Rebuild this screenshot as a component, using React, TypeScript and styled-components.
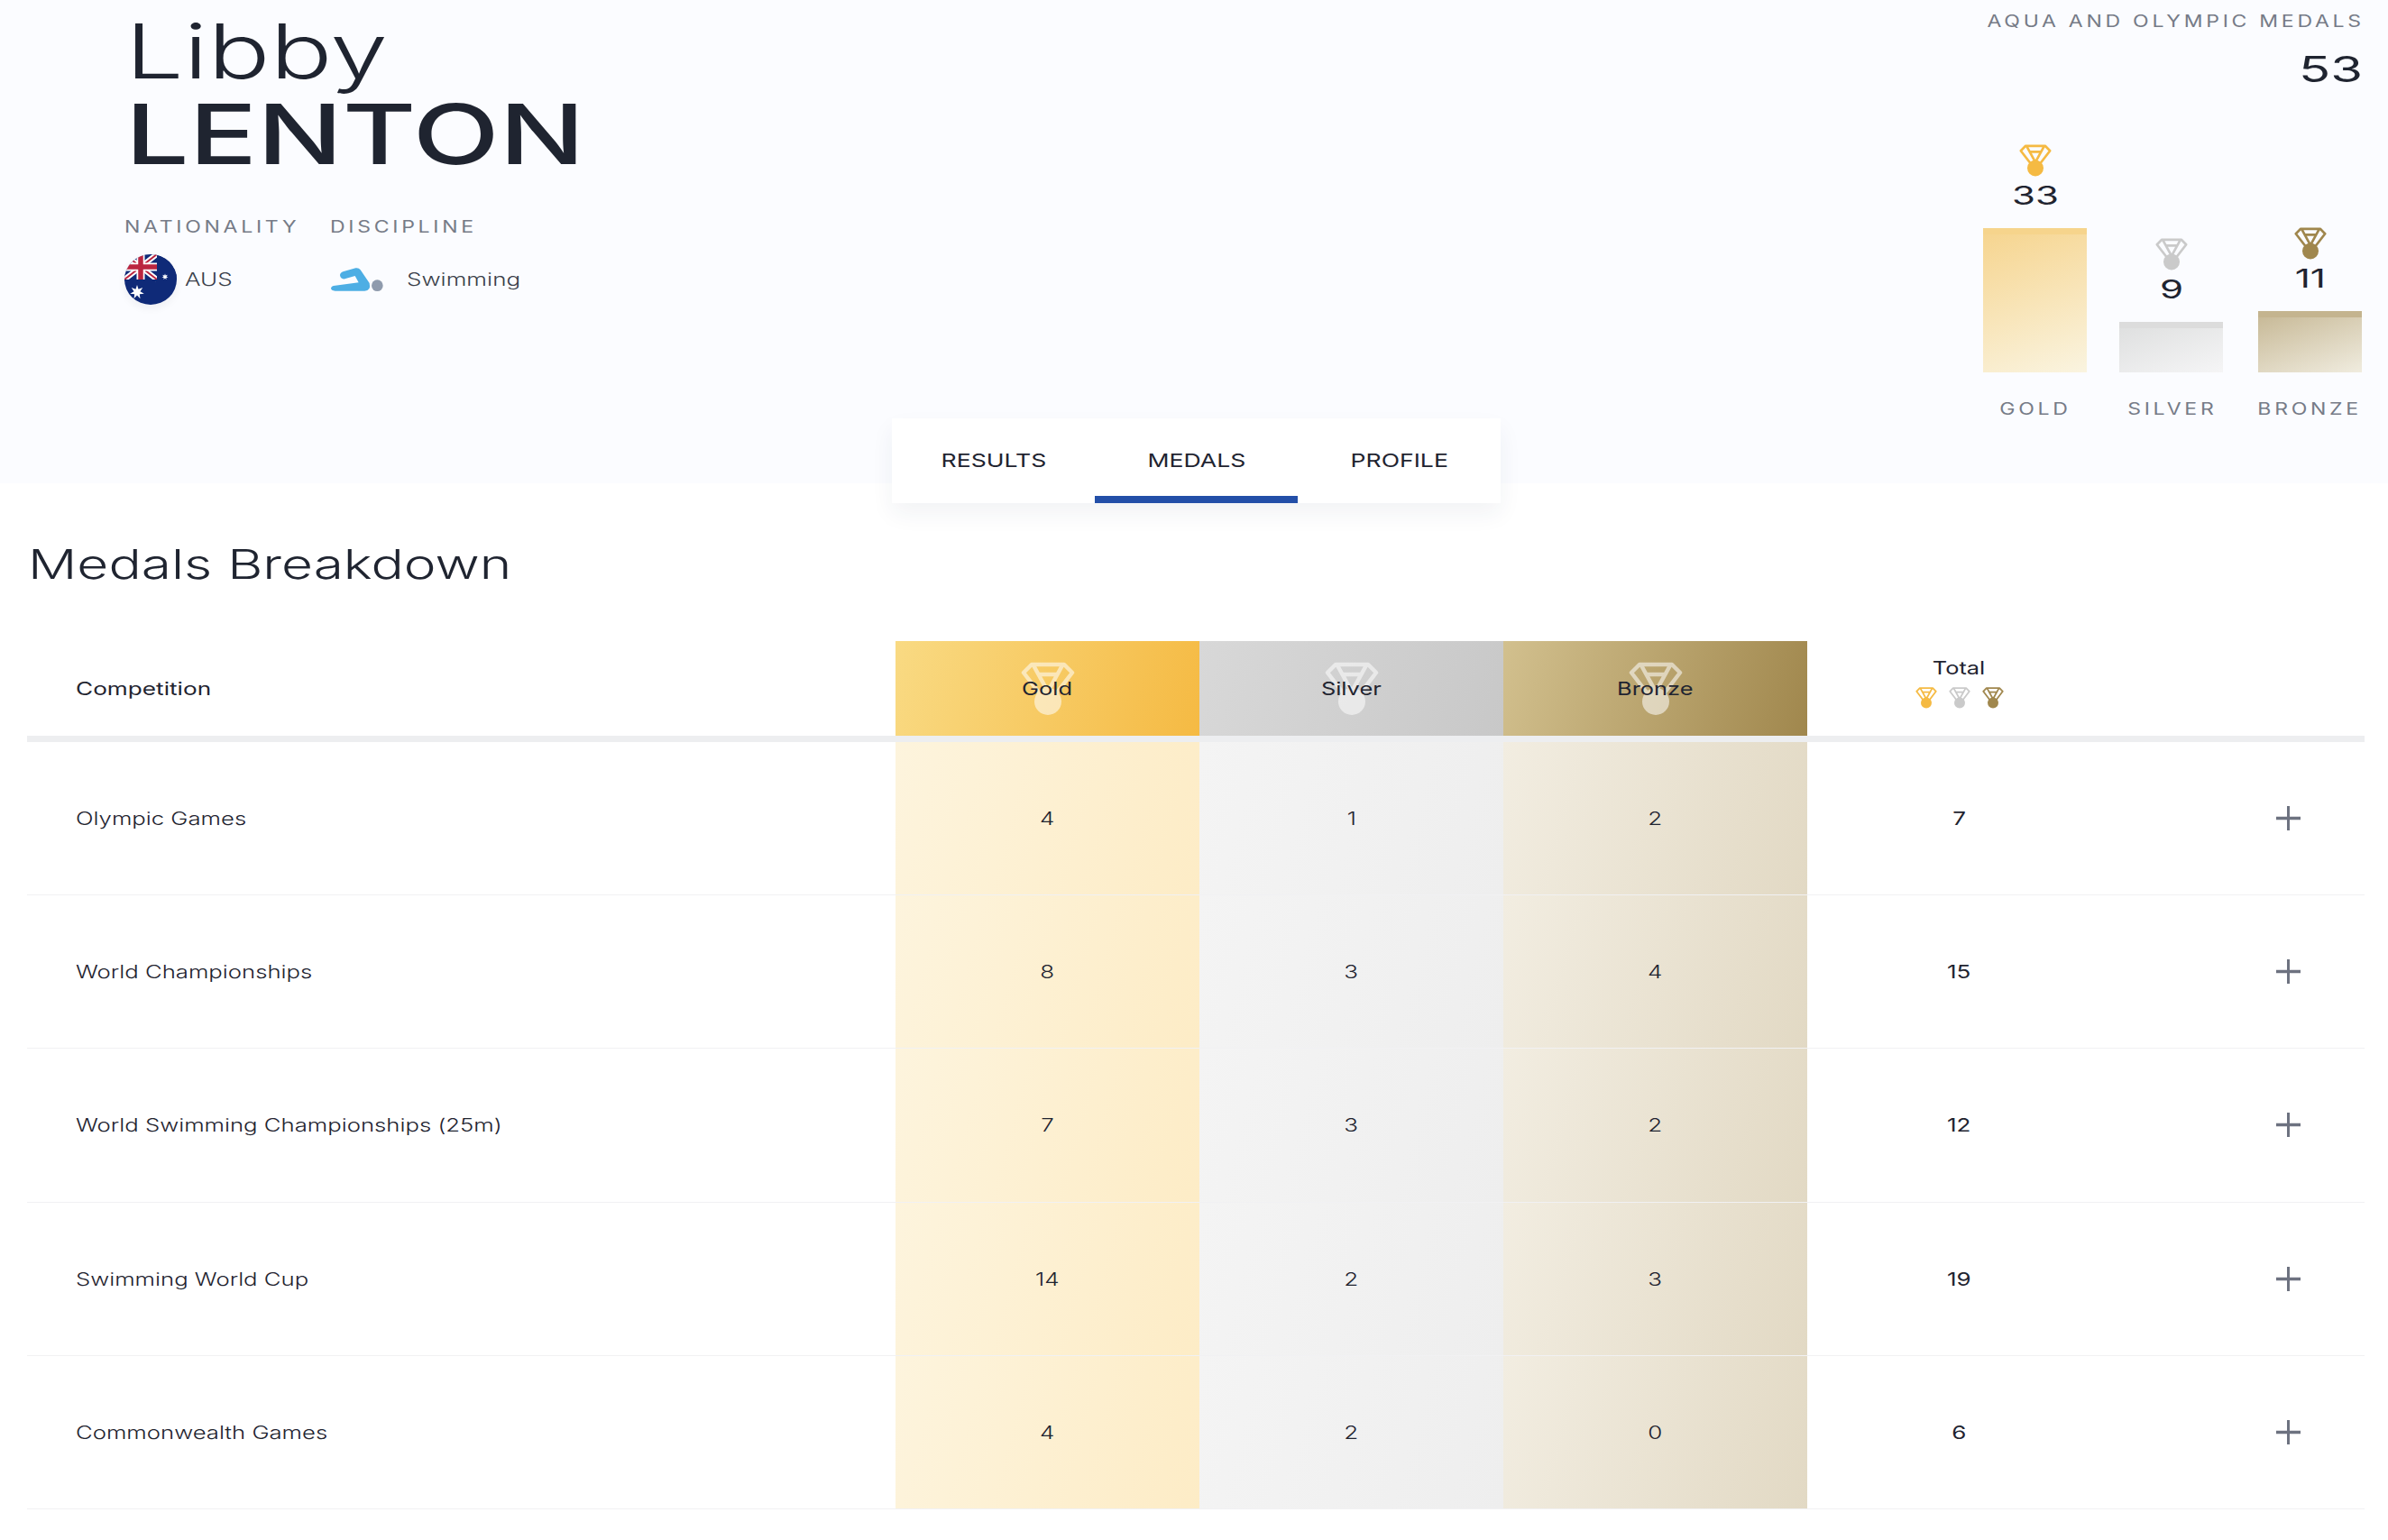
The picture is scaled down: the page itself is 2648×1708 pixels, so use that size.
import React from "react";
import styled, { createGlobalStyle, css } from "styled-components";

const INK = "#1f2430";
const GREY = "#767b87";

const GlobalStyle = createGlobalStyle`
  html, body {
    margin: 0;
    padding: 0;
    background: #fff;
    font-family: "Inter", "Liberation Sans", sans-serif;
    color: ${INK};
  }
`;

// the reference font is an extended grotesque, none is installed, so stretch Inter
const wide = (origin: string, sx = 1.3) => css`
  display: inline-block;
  white-space: nowrap;
  transform: scaleX(${sx});
  transform-origin: ${origin};
`;

const Page = styled.div`
  width: 2648px;
  height: 1708px;
  overflow: hidden;
`;

const Hero = styled.header`
  height: 536px;
  box-sizing: border-box;
  background: #fbfcff;
  display: flex;
  justify-content: space-between;
  padding: 12px 29px 0 138px;
`;

const Athlete = styled.div`
  display: flex;
  flex-direction: column;
`;

const FirstName = styled.span`
  ${wide("left", 1.365)}
  margin-left: 1px;
  font-size: 84px;
  line-height: 90px;
  font-weight: 300;
`;

const LastName = styled.span`
  ${wide("left", 1.36)}
  margin-left: 1px;
  font-size: 92px;
  line-height: 94px;
  font-weight: 450;
`;

const MetaRow = styled.div`
  display: flex;
  margin-top: 46px;
`;

const MetaBlock = styled.div<{ $width: number }>`
  width: ${(p) => p.$width}px;
  display: flex;
  flex-direction: column;
  gap: 20px;
`;

const Eyebrow = styled.span<{ $origin?: string }>`
  ${(p) => wide(p.$origin || "left", 1.28)}
  font-size: 18px;
  line-height: 20px;
  letter-spacing: 2.9px;
  color: ${GREY};
`;

const MetaValue = styled.div<{ $gap: number }>`
  display: flex;
  align-items: center;
  gap: ${(p) => p.$gap}px;
  height: 56px;
`;

const MetaText = styled.span`
  ${wide("left")}
  font-size: 20px;
  font-weight: 300;
  color: #3a3f4a;
`;

const FlagDisc = styled.svg`
  width: 58px;
  height: 56px;
  border-radius: 50%;
  box-shadow: 0 4px 10px rgba(31, 36, 48, 0.06);
`;

const Summary = styled.section`
  display: flex;
  flex-direction: column;
  align-items: flex-end;
`;

const TotalLabel = styled(Eyebrow)`
  line-height: 24px;
  margin-right: -3px;
`;

const TotalValue = styled.span`
  ${wide("right", 1.45)}
  margin: 17px -1px 0 0;
  font-size: 40px;
  line-height: 48px;
`;

const Chart = styled.div`
  display: grid;
  grid-template-columns: repeat(3, 115px);
  column-gap: 37.5px;
  align-items: end;
  height: 312px;
`;

const ChartColumn = styled.div`
  display: flex;
  flex-direction: column;
  align-items: center;

  &:nth-child(2) {
    margin: 0 1.5px 0 -1.5px;
  }
`;

const ChartCount = styled.span`
  ${wide("center", 1.45)}
  margin: 6px 0 21px;
  font-size: 29px;
  line-height: 30px;
`;

const barFills = {
  gold: ["#f6d48c", "#f6d590", "#faf4e0"],
  silver: ["#dcdcdc", "#dfe0e0", "#f5f5f6"],
  bronze: ["#c4b48f", "#c8ba98", "#f0ecdf"],
};

type Metal = keyof typeof barFills;

const Bar = styled.div<{ $metal: Metal; $height: number }>`
  width: 100%;
  height: ${(p) => p.$height}px;
  background: linear-gradient(160deg, ${(p) => barFills[p.$metal][1]}, ${(p) => barFills[p.$metal][2]});
  border-top: 7px solid ${(p) => barFills[p.$metal][0]};
  box-sizing: border-box;
`;

const ChartLabels = styled.div`
  display: grid;
  grid-template-columns: repeat(3, 115px);
  column-gap: 37.5px;
  margin-top: 31px;
  justify-items: center;
`;

const ChartLabel = styled(Eyebrow)``;

const Tabs = styled.nav`
  position: relative;
  width: 675px;
  height: 94px;
  margin: -72px 0 0 989px;
  display: flex;
  background: #fff;
  box-shadow: 0 12px 24px rgba(31, 45, 90, 0.06);
`;

const Tab = styled.div<{ $active?: boolean }>`
  flex: 1;
  display: flex;
  align-items: center;
  justify-content: center;
  box-shadow: ${(p) => (p.$active ? "inset 0 -8px 0 #234fa8" : "none")};
`;

const TabText = styled.span`
  ${wide("center", 1.33)}
  font-size: 20px;
  font-weight: 400;
`;

const Heading = styled.h2`
  ${wide("left", 1.342)}
  display: block;
  margin: 38px 0 55px 31px;
  font-size: 45px;
  line-height: 60px;
  font-weight: 300;
`;

const Table = styled.div`
  margin: 0 26px 0 30px;
`;

const columns = css`
  display: grid;
  grid-template-columns: 963px repeat(4, 337px) 1fr;
`;

const HeadRow = styled.div`
  ${columns}
  height: 112px;
  box-sizing: border-box;
  border-bottom: 7px solid #edeef0;
`;

const BodyRow = styled.div`
  ${columns}
  height: 170.2px;
  box-sizing: border-box;
  border-bottom: 1px solid #f1f1f3;
`;

const Cell = styled.div`
  display: flex;
  align-items: center;
  justify-content: center;
`;

const NameCell = styled(Cell)`
  justify-content: flex-start;
  padding-left: 54px;
`;

const headFills = {
  gold: "linear-gradient(105deg, #f9da83, #f5ba43)",
  silver: "linear-gradient(105deg, #d8d8d8, #c8c8c8)",
  bronze: "linear-gradient(105deg, #d2c08e, #a0874d)",
};

const bodyFills = {
  gold: "linear-gradient(105deg, #fdf4dd, #fdecc6)",
  silver: "linear-gradient(105deg, #f4f4f4, #eeeeee)",
  bronze: "linear-gradient(105deg, #f2ede1, #e2d9c4)",
};

const MetalHead = styled(Cell)<{ $metal: Metal }>`
  position: relative;
  background: ${(p) => headFills[p.$metal]};
`;

const MetalBody = styled(Cell)<{ $metal: Metal }>`
  background: ${(p) => bodyFills[p.$metal]};
`;

const Watermark = styled.span`
  position: absolute;
  left: 50%;
  top: 23px;
  width: 60px;
  height: 60px;
  margin-left: -30px;
  opacity: 0.55;
`;

const HeadText = styled.span`
  ${wide("left", 1.31)}
  font-size: 20px;
  font-weight: 400;
`;

const HeadCenter = styled.span`
  ${wide("center", 1.27)}
  position: relative;
  font-size: 20px;
  line-height: 26px;
  font-weight: 400;
`;

const TotalHead = styled(Cell)`
  flex-direction: column;
  gap: 8px;
  padding-bottom: 14px;
`;

const TinyMedals = styled.div`
  display: flex;
  gap: 13px;
`;

const RowName = styled.span`
  ${wide("left", 1.285)}
  font-size: 20px;
  font-weight: 300;
  padding-top: 1px;
`;

const Count = styled.span`
  ${wide("center", 1.3)}
  font-size: 20px;
  font-weight: 300;
  padding-top: 1px;
`;

const RowTotal = styled.span`
  ${wide("center", 1.3)}
  font-size: 20px;
  font-weight: 400;
  padding-top: 1px;
`;

const ExpandCell = styled(Cell)`
  justify-content: flex-end;
  padding-right: 71px;
`;

const medalColors = { gold: "#f5ba43", silver: "#cacaca", bronze: "#a0874d" };

const Medal = ({ color, size }: { color: string; size: number }) => (
  <svg width={size} height={size} viewBox="0 0 60 60" fill="none" style={{ display: "block" }}>
    <path
      d="M23 38 L3 12 L12 3 H48 L57 12 L37 38 M14 4 L30 33 L46 4 M19 14 H41"
      stroke={color}
      strokeWidth="4.5"
      strokeLinejoin="round"
    />
    <circle cx="30" cy="44" r="15" fill={color} />
  </svg>
);

const starPoints = (cx: number, cy: number, r: number) => {
  const pts: string[] = [];
  for (let i = 0; i < 14; i++) {
    const a = (Math.PI * i) / 7 - Math.PI / 2;
    const d = i % 2 === 0 ? r : r * 0.45;
    pts.push(`${(cx + d * Math.cos(a)).toFixed(2)},${(cy + d * Math.sin(a)).toFixed(2)}`);
  }
  return pts.join(" ");
};

const Flag = () => (
  <FlagDisc viewBox="0 0 58 56">
    <rect width="58" height="56" fill="#0f2a78" />
    <path d="M0 0 L36 28 M36 0 L0 28" stroke="#fff" strokeWidth="6" />
    <path d="M0 0 L36 28 M36 0 L0 28" stroke="#bb2540" strokeWidth="2" />
    <path d="M18 0 V28 M0 14 H36" stroke="#fff" strokeWidth="9" />
    <path d="M18 0 V28 M0 14 H36" stroke="#bb2540" strokeWidth="5.5" />
    <rect x="36" y="0" width="22" height="28" fill="#0f2a78" />
    <rect x="0" y="28" width="36" height="2" fill="#0f2a78" />
    <polygon points={starPoints(14, 42, 8)} fill="#fff" />
    <polygon points={starPoints(45, 25, 3.6)} fill="#fff" />
  </FlagDisc>
);

const SwimIcon = () => (
  <svg width="60" height="28" viewBox="45 80 180 84" fill="none" style={{ display: "block" }}>
    <path
      d="M88 96 L130 84 Q140 82 146 90 L176 134 Q182 160 160 160 L62 160 Q48 160 48 150 Q50 143 62 142 L140 132 L128 110 L94 120 Q80 122 78 108 Q78 100 88 96 Z"
      fill="#4daee4"
    />
    <circle cx="202" cy="142" r="19" fill="#8f9bad" />
  </svg>
);

const PlusIcon = () => (
  <svg width="27" height="27" viewBox="0 0 27 27" style={{ display: "block" }}>
    <path d="M13.5 0 V27" stroke="#6d7280" strokeWidth="3" />
    <path d="M0 13.5 H27" stroke="#6d7280" strokeWidth="3.5" />
  </svg>
);

const podium: { metal: Metal; label: string; count: number; height: number }[] = [
  { metal: "gold", label: "GOLD", count: 33, height: 160 },
  { metal: "silver", label: "SILVER", count: 9, height: 56 },
  { metal: "bronze", label: "BRONZE", count: 11, height: 68 },
];

const rows = [
  { name: "Olympic Games", gold: 4, silver: 1, bronze: 2, total: 7 },
  { name: "World Championships", gold: 8, silver: 3, bronze: 4, total: 15 },
  { name: "World Swimming Championships (25m)", gold: 7, silver: 3, bronze: 2, total: 12 },
  { name: "Swimming World Cup", gold: 14, silver: 2, bronze: 3, total: 19 },
  { name: "Commonwealth Games", gold: 4, silver: 2, bronze: 0, total: 6 },
];

export default function App() {
  return (
    <Page>
      <GlobalStyle />
      <Hero>
        <Athlete>
          <FirstName>Libby</FirstName>
          <LastName>LENTON</LastName>
          <MetaRow>
            <MetaBlock $width={228}>
              <Eyebrow>NATIONALITY</Eyebrow>
              <MetaValue $gap={9}>
                <Flag />
                <MetaText>AUS</MetaText>
              </MetaValue>
            </MetaBlock>
            <MetaBlock $width={240}>
              <Eyebrow>DISCIPLINE</Eyebrow>
              <MetaValue $gap={25}>
                <SwimIcon />
                <MetaText>Swimming</MetaText>
              </MetaValue>
            </MetaBlock>
          </MetaRow>
        </Athlete>
        <Summary>
          <TotalLabel $origin="right">AQUA AND OLYMPIC MEDALS</TotalLabel>
          <TotalValue>53</TotalValue>
          <Chart>
            {podium.map((p) => (
              <ChartColumn key={p.metal}>
                <Medal color={medalColors[p.metal]} size={36} />
                <ChartCount>{p.count}</ChartCount>
                <Bar $metal={p.metal} $height={p.height} />
              </ChartColumn>
            ))}
          </Chart>
          <ChartLabels>
            {podium.map((p) => (
              <ChartLabel key={p.metal} $origin="center">
                {p.label}
              </ChartLabel>
            ))}
          </ChartLabels>
        </Summary>
      </Hero>
      <Tabs>
        <Tab>
          <TabText>RESULTS</TabText>
        </Tab>
        <Tab $active>
          <TabText>MEDALS</TabText>
        </Tab>
        <Tab>
          <TabText>PROFILE</TabText>
        </Tab>
      </Tabs>
      <Heading>Medals Breakdown</Heading>
      <Table>
        <HeadRow>
          <NameCell>
            <HeadText>Competition</HeadText>
          </NameCell>
          {podium.map((p) => (
            <MetalHead key={p.metal} $metal={p.metal}>
              <Watermark>
                <Medal color="#ffffff" size={60} />
              </Watermark>
              <HeadCenter>{p.label.charAt(0) + p.label.slice(1).toLowerCase()}</HeadCenter>
            </MetalHead>
          ))}
          <TotalHead>
            <HeadCenter>Total</HeadCenter>
            <TinyMedals>
              {podium.map((p) => (
                <Medal key={p.metal} color={medalColors[p.metal]} size={24} />
              ))}
            </TinyMedals>
          </TotalHead>
          <Cell />
        </HeadRow>
        {rows.map((r) => (
          <BodyRow key={r.name}>
            <NameCell>
              <RowName>{r.name}</RowName>
            </NameCell>
            <MetalBody $metal="gold">
              <Count>{r.gold}</Count>
            </MetalBody>
            <MetalBody $metal="silver">
              <Count>{r.silver}</Count>
            </MetalBody>
            <MetalBody $metal="bronze">
              <Count>{r.bronze}</Count>
            </MetalBody>
            <Cell>
              <RowTotal>{r.total}</RowTotal>
            </Cell>
            <ExpandCell>
              <PlusIcon />
            </ExpandCell>
          </BodyRow>
        ))}
      </Table>
    </Page>
  );
}
